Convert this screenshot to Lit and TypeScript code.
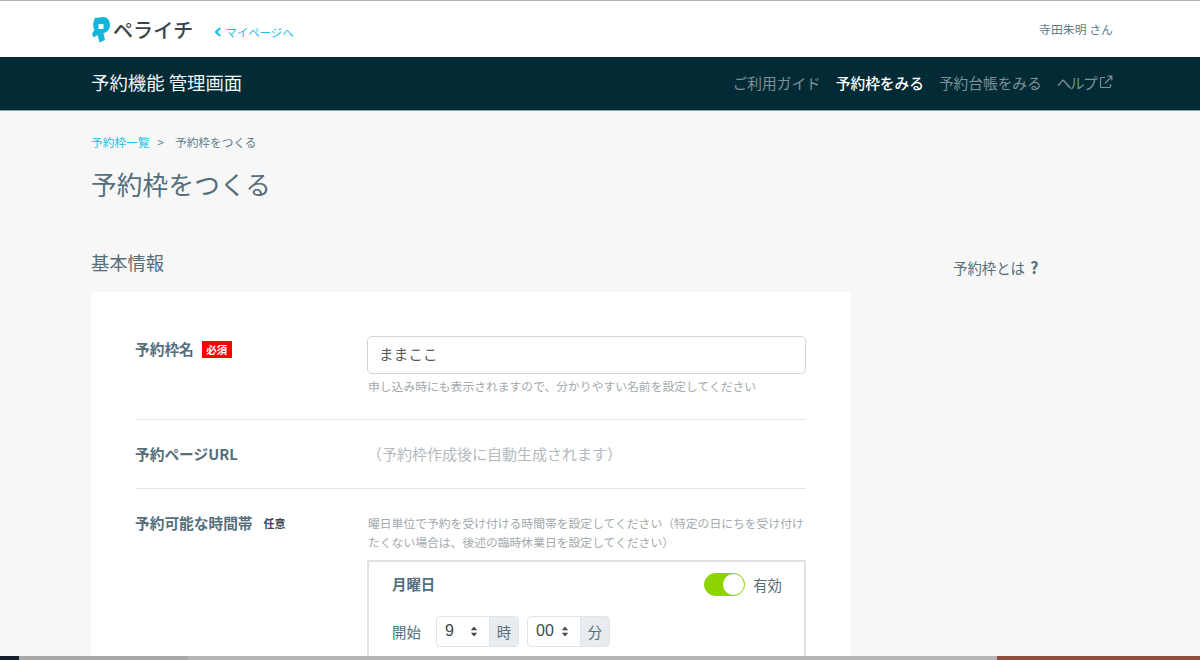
import { LitElement, html, css } from "lit";
import { customElement } from "lit/decorators.js";

@customElement("app-root")
export class AppRoot extends LitElement {
  static styles = css`
    :host { display: block; width: 1200px; height: 660px; overflow: hidden; position: relative; background: #f7f7f7;
      font-family: "Noto Sans CJK JP", "Lato", sans-serif; color: #546e7a; }
    * { box-sizing: border-box; }
    .top { height: 57px; background: #fff; border-top: 1px solid #b0b0b0; padding: 0 87px 0 92px; display: flex; align-items: center; justify-content: space-between; }
    .brand { display: flex; align-items: center; }
    .logo { width: 18px; height: 26px; margin-top: 2px; }
    .wordmark { font-size: 20px; font-weight: 500; color: #3c4448; margin-left: 3px; line-height: 26px; margin-top: 1px; letter-spacing: 0.1px; }
    .back { display: flex; align-items: center; color: #1cc0e0; font-size: 11.4px; margin-left: 21px; margin-top: 5px; gap: 3px; }
    .user { font-size: 11.9px; color: #607d8b; margin-top: -2px; }
    .bar { height: 54px; background: #022b36; padding: 0 87px 3px 91px; display: flex; align-items: center; justify-content: space-between; border-bottom: 1px solid #90a4ae; }
    .title { color: #f2f5f6; font-size: 18.4px; font-weight: 400; }
    .nav { display: flex; gap: 15px; font-size: 14.7px; color: #7d9198; align-items: center; }
    .nav .on { color: #fff; font-weight: 500; }
    .help { display: flex; align-items: center; gap: 3px; letter-spacing: -1.6px; }
    .main { padding: 22px 0 0 91px; display: grid; grid-template-columns: 760px 1fr; }
    .crumbs { grid-column: 1 / -1; font-size: 11.7px; line-height: 18px; display: flex; color: #607d8b; }
    .crumbs a { color: #1cc0e0; }
    .crumbs .sep { margin: 0 11px 0 8px; }
    h1 { grid-column: 1 / -1; margin: 13px 0 0 0; font-size: 25.6px; font-weight: 400; line-height: 40px; color: #546e7a; letter-spacing: 0.2px; }
    .sect { font-size: 18.3px; font-weight: 400; line-height: 28px; margin: 0; color: #546e7a; }
    .left { margin-top: 44px; }
    .side { margin-top: 49px; padding-left: 102px; font-size: 14.4px; line-height: 28px; color: #546e7a; }
    .side b { font-weight: 700; margin-left: 2px; font-size: 16px; }
    .card { margin-top: 16px; background: #fff; border-radius: 4px; padding: 44px 45px 0 45px; height: 420px; }
    .row { display: grid; grid-template-columns: 231px 1fr; border-bottom: 1px solid #e3e8ec; }
    .row:last-child { border-bottom: none; }
    .r1 { height: 84px; }
    .r2 { height: 69px; padding-top: 20px; }
    .r3 { padding-top: 21px; }
    .label { font-size: 14.7px; font-weight: 700; color: #546e7a; display: flex; align-items: flex-start; line-height: 28px; height: 28px; margin-left: -1px; }
    .r1 .label, .r3 .label { margin-top: -1px; }
    .req { background: #f00; color: #fff; font-size: 10.5px; font-weight: 700; width: 30px; height: 17px; line-height: 17px; text-align: center; margin: 6px 0 0 8px; }
    .opt { color: #37474f; font-size: 11px; font-weight: 700; line-height: 17px; margin: 6px 0 0 11px; }
    .input { width: 439px; height: 38px; border: 1px solid #ced6e0; border-radius: 5px; padding: 0 11px; font-size: 14.4px; line-height: 33px; color: #54595c; letter-spacing: 0.3px; background: #fff; }
    .help-t { font-size: 11.8px; color: #a3a9ac; line-height: 20px; margin-top: 2px; padding-left: 1px; }
    .auto { font-size: 15px; color: #b4babd; line-height: 28px; }
    .r3 .help-t { margin-top: 4px; width: 440px; line-height: 18.6px; }
    .day { width: 439px; border: 2px solid #dfe3e6; margin-top: 8.8px; height: 160px; padding: 0 22px 0 23px; }
    .dayhead { display: flex; align-items: center; justify-content: space-between; height: 46px; }
    .dayname { font-size: 14.4px; font-weight: 700; margin-top: -2px; }
    .toggle { display: flex; align-items: center; font-size: 14.4px; gap: 8px; }
    .sw { width: 41px; height: 23px; border-radius: 12px; background: #8cd500; position: relative; border: 1px solid #8cd500; }
    .sw i { position: absolute; right: 0; top: 0; width: 21px; height: 21px; border-radius: 50%; background: #fff; display: block; }
    .times { display: flex; align-items: center; margin-top: 8px; font-size: 14.4px; }
    .times .lb { width: 44px; }
    .group { display: flex; height: 31px; border: 1px solid #dfe4ea; border-radius: 4px; overflow: hidden; font-size: 14.4px; }
    .group + .group { margin-left: 8px; }
    .sel { width: 52px; display: flex; align-items: center; justify-content: space-between; padding: 0 11px 0 8px; color: #43494d; font-family: "Liberation Sans", sans-serif; font-size: 16px; }
    .unit { width: 29px; background: #e8ebef; border-left: 1px solid #dfe4ea; display: flex; align-items: center; justify-content: center; color: #546e7a; }
    .arrows { width: 8px; height: 11px; }
    .strip { position: absolute; left: 0; right: 0; bottom: 0; height: 4px; background: #b4b4b4; display: flex; }
    .strip .a { width: 19px; background: #16202c; }
    .strip .b { width: 169px; background: #a9a9a9; }
    .strip .c { flex: 1; background: #b6b6b6; }
    .strip .d { width: 203px; background: #8f4f3c; }
  `;

  render() {
    const arrows = html`<svg class="arrows" viewBox="0 0 8 11"><path d="M4 0.5 7.2 4.2H.8zM4 10.5 .8 6.8H7.2z" fill="#43494d"/></svg>`;
    return html`
      <div class="top">
        <div class="brand">
          <svg class="logo" viewBox="0 0 18 26">
            <path fill-rule="evenodd" fill="#12b5dc" d="M3 1 L11 0 C15.5 0 18 3 18 8 C18 12.5 15 15.5 11.5 16 L13 23 L7.5 25.5 L5.5 18 L1.5 20.5 L0 16.5 L2.5 13 C0.5 10 1 4 3 1Z M6.5 7 L6.5 12 L11.5 12 L11.5 7Z"/>
          </svg>
          <span class="wordmark">ペライチ</span>
          <span class="back">
            <svg width="8" height="10" viewBox="0 0 8 10"><path d="M6.2 1 2 5l4.2 4" fill="none" stroke="#1cc0e0" stroke-width="2.2"/></svg>
            マイページへ
          </span>
        </div>
        <div class="user">寺田朱明 さん</div>
      </div>
      <div class="bar">
        <div class="title">予約機能 管理画面</div>
        <div class="nav">
          <span>ご利用ガイド</span>
          <span class="on">予約枠をみる</span>
          <span>予約台帳をみる</span>
          <span class="help">ヘルプ
            <svg width="14" height="14" viewBox="0 0 14 14" fill="none" stroke="#7d9198" stroke-width="1.2"><path d="M6 2.5H2.5a1 1 0 0 0-1 1v8a1 1 0 0 0 1 1h8a1 1 0 0 0 1-1V9"/><path d="M6 8.5 12.5 1.5M8.5 1.2h4.3v4.3"/></svg>
          </span>
        </div>
      </div>
      <div class="main">
        <div class="crumbs"><a>予約枠一覧</a><span class="sep">&gt;</span><span>予約枠をつくる</span></div>
        <h1>予約枠をつくる</h1>
        <div class="left">
          <h2 class="sect">基本情報</h2>
          <div class="card">
            <div class="row r1">
              <div class="label">予約枠名<span class="req">必須</span></div>
              <div>
                <div class="input">ままここ</div>
                <div class="help-t">申し込み時にも表示されますので、分かりやすい名前を設定してください</div>
              </div>
            </div>
            <div class="row r2">
              <div class="label">予約ページURL</div>
              <div class="auto">（予約枠作成後に自動生成されます）</div>
            </div>
            <div class="row r3">
              <div class="label">予約可能な時間帯<span class="opt">任意</span></div>
              <div>
                <div class="help-t">曜日単位で予約を受け付ける時間帯を設定してください（特定の日にちを受け付けたくない場合は、後述の臨時休業日を設定してください）</div>
                <div class="day">
                  <div class="dayhead">
                    <span class="dayname">月曜日</span>
                    <span class="toggle"><span class="sw"><i></i></span>有効</span>
                  </div>
                  <div class="times">
                    <span class="lb">開始</span>
                    <div class="group"><div class="sel">9 ${arrows}</div><div class="unit">時</div></div>
                    <div class="group"><div class="sel">00 ${arrows}</div><div class="unit">分</div></div>
                  </div>
                </div>
              </div>
            </div>
          </div>
        </div>
        <div class="side">予約枠とは <b>?</b></div>
      </div>
      <div class="strip"><div class="a"></div><div class="b"></div><div class="c"></div><div class="d"></div></div>
    `;
  }
}
